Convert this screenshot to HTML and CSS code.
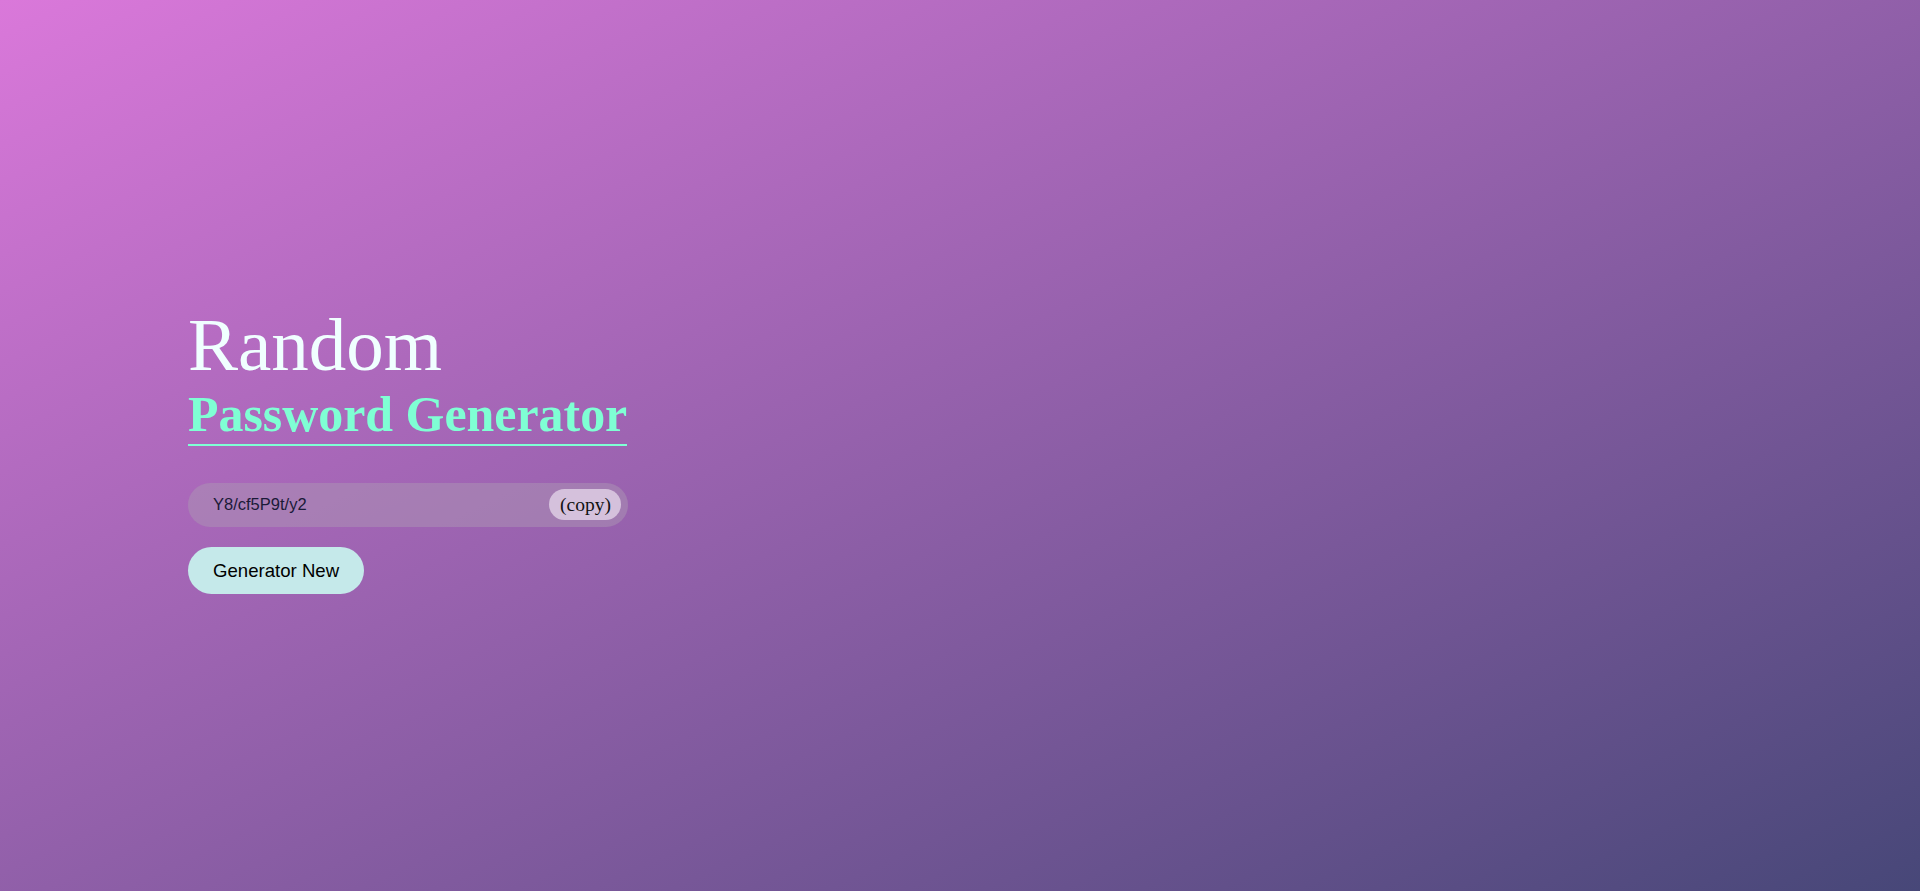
FILE: index.html
```html
<!DOCTYPE html>
<html lang="en">
<head>
<meta charset="utf-8">
<title>Random Password Generator</title>
<link rel="stylesheet" href="styles.css">
</head>
<body>
<main class="page">
  <section class="generator">
    <h1 class="title">Random</h1>
    <h2 class="subtitle">Password Generator</h2>
    <div class="output">
      <span class="password">Y8/cf5P9t/y2</span>
      <button class="copy" type="button">(copy)</button>
    </div>
    <button class="generate" type="button">Generator New</button>
  </section>
</main>
</body>
</html>
```

FILE: styles.css
```css
* {
  box-sizing: border-box;
}

html, body {
  margin: 0;
  padding: 0;
  height: 100%;
}

body {
  background: linear-gradient(to bottom right, #da78da, #474778);
  font-family: "Liberation Serif", "Times New Roman", serif;
}

.page {
  min-height: 100vh;
  display: flex;
  flex-direction: column;
  justify-content: center;
  padding: 10px 0 0 188px;
}

.generator {
  display: flex;
  flex-direction: column;
  align-items: flex-start;
  width: 460px;
}

.title {
  margin: 0;
  font-size: 75px;
  line-height: 75px;
  font-weight: normal;
  color: #f0ffff;
}

.subtitle {
  margin: 8px 0 0;
  font-size: 49.9px;
  line-height: 50px;
  font-weight: bold;
  white-space: nowrap;
  color: #7fffd4;
  padding-bottom: 4px;
  border-bottom: 2px solid #7fffd4;
}

.output {
  margin-top: 37px;
  width: 440px;
  height: 44px;
  border-radius: 22px;
  background: rgba(172, 150, 180, 0.5);
  display: flex;
  align-items: center;
  justify-content: space-between;
  padding: 0 7px 1px 25px;
}

.password {
  font-family: "Liberation Sans", Arial, sans-serif;
  font-size: 16.5px;
  color: #1a1a38;
}

.copy {
  height: 31px;
  padding: 0 10px 0 11px;
  border: none;
  border-radius: 16px;
  background: #d5c1dc;
  font-family: "Liberation Serif", "Times New Roman", serif;
  font-size: 19.5px;
  color: #111;
  line-height: 31px;
}

.generate {
  margin-top: 20px;
  height: 47px;
  padding: 0 25px;
  border: none;
  border-radius: 24px;
  background: #c5e9ea;
  font-family: "Liberation Sans", Arial, sans-serif;
  font-size: 18.6px;
  color: #000;
}
```
